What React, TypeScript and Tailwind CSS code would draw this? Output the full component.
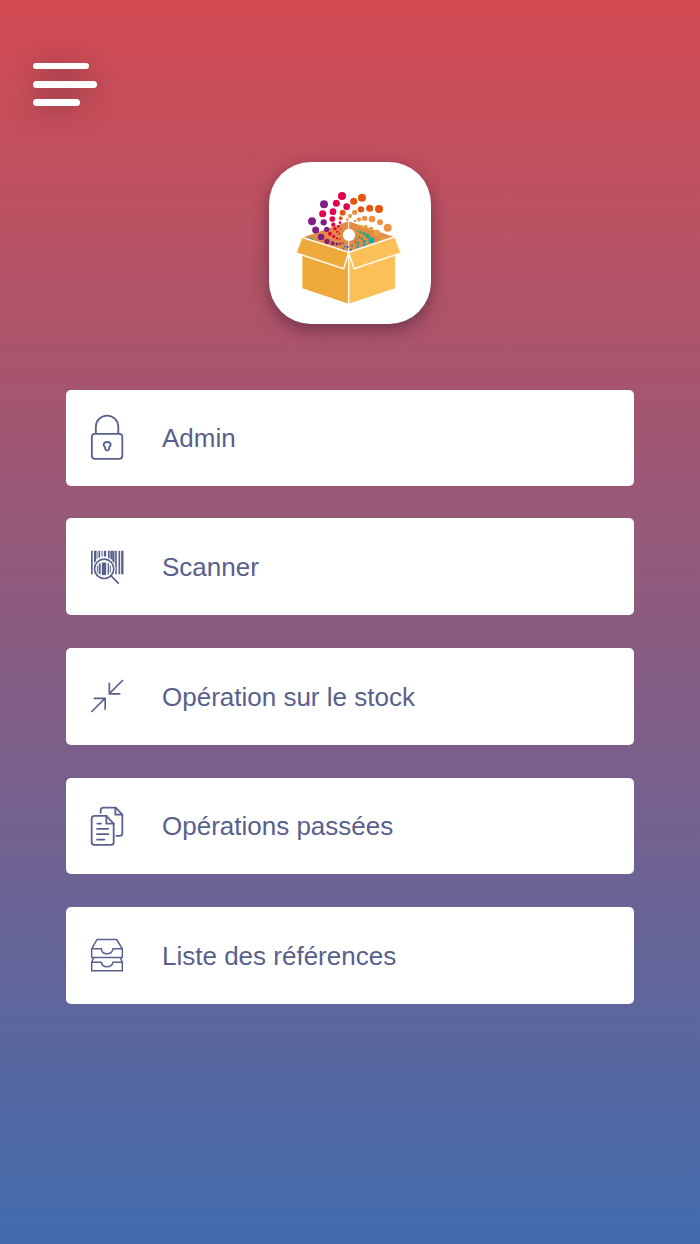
import type { ReactNode } from "react";

type Dot = [number, number, number, string];

const PURPLE = "#7f1f86";
const PINK = "#e5004f";
const ORANGE = "#e8540c";
const PEACH = "#f09148";
const GOLD = "#e5a044";
const GREEN = "#27a57c";
const TEAL = "#0fa9b4";
const BLUE = "#2f78ba";

const dots: Dot[] = [
  [207, 163, 12, PURPLE], [171, 214, 12, PURPLE], [206, 217, 9.5, PURPLE], [182, 240, 10.5, PURPLE],
  [215, 238, 8, PURPLE], [198, 261, 10, PURPLE], [216, 274, 8, PURPLE], [233, 280, 6, PURPLE],
  [246, 282, 4.5, PURPLE], [256, 281, 3.5, PURPLE], [264, 279, 2.5, PURPLE],
  [261, 138, 12, PINK], [244, 160, 10.5, PINK], [275, 170, 10, PINK], [203, 191, 10.5, PINK],
  [234, 185, 10, PINK], [232, 207, 8.5, PINK], [235, 224, 6.5, PINK], [225, 251, 6, PINK],
  [240, 236, 5, PINK], [236, 259, 5, PINK], [246, 265, 3.5, PINK], [247, 245, 3.5, PINK],
  [250, 229, 4, PINK], [255, 218, 4, PINK], [255, 267, 2.5, PINK], [253, 251, 2.5, PINK], [258, 237, 2.5, PINK],
  [321, 143, 12, ORANGE], [296, 154, 10.5, ORANGE], [318, 178, 9.5, ORANGE], [344, 175, 10.5, ORANGE],
  [372, 177, 12, ORANGE], [263, 188, 8.5, ORANGE], [257, 205, 6, ORANGE],
  [285, 198, 6, PEACH], [299, 187, 8, PEACH], [277, 209, 4, PEACH], [300, 213, 4, PEACH],
  [312, 208, 6.5, PEACH], [329, 205, 8, PEACH], [351, 207, 10, PEACH], [375, 217, 9, PEACH], [398, 233, 12, PEACH],
  [309, 228, 3, GOLD], [319, 228, 4, GOLD], [332, 230, 6, GOLD], [348, 237, 7, GOLD], [366, 249, 10, GOLD], [384, 267, 8, GOLD],
  [327, 251, 5, GREEN], [338, 258, 6.5, GREEN], [317, 247, 3.5, GREEN], [310, 244, 2.5, GREEN],
  [313, 261, 3, GREEN], [320, 266, 3.5, GREEN], [328, 274, 5, TEAL],
  [349, 271, 9, TEAL], [329, 286, 6, TEAL], [306, 268, 2.5, TEAL], [309, 280, 4, TEAL], [308, 290, 4, TEAL], [301, 275, 2.5, BLUE],
  [278, 291, 3.5, BLUE], [288, 300, 4, BLUE], [265, 297, 3, BLUE], [269, 290, 2.5, BLUE], [291, 287, 2.5, BLUE],
];

function Logo() {
  return (
    <svg viewBox="42 36 486 486" className="size-full" aria-hidden="true">
      <path d="M141 263 281 214 419 262 281 306Z" fill="#e38b42" />
      <path d="M281 212V306" stroke="#fff" strokeWidth="3" />
      <path d="m162 265q9-5 15 5l-12-3Z" fill={TEAL} />
      {dots.map(([x, y, r, fill], i) => (
        <circle key={i} cx={x} cy={y} r={r} fill={fill} />
      ))}
      <circle cx="282" cy="255" r="18.5" fill="#fff" />
      <path d="M142 310 281 310V461L142 415Z" fill="#edaa3a" />
      <path d="M281 310H420V415L281 461Z" fill="#fcc059" />
      <g stroke="#fffaf0" strokeWidth="4.5" strokeLinejoin="round">
        <path d="M140 262 281 307 266 356 123 309Z" fill="#edaa3a" />
        <path d="M420 260 281 307 297 356 438 309Z" fill="#fcc059" />
        <path d="M281 305V462" fill="none" />
      </g>
    </svg>
  );
}

function Icon({ viewBox, children }: { viewBox: string; children: ReactNode }) {
  return (
    <svg
      viewBox={viewBox}
      className="h-[50px] w-[55px] shrink-0"
      fill="none"
      stroke="#58618c"
      strokeWidth="5.4"
      strokeLinecap="round"
      strokeLinejoin="round"
      aria-hidden="true"
    >
      {children}
    </svg>
  );
}

const items: { label: string; icon: ReactNode }[] = [
  {
    label: "Admin",
    icon: (
      <Icon viewBox="60 99.5 165 150">
        <rect x="95.500" y="162" width="91.500" height="75" rx="9" />
        <path d="M107.500 160V141a33.700 33.700 0 0 1 67.400 0v19" />
        <path d="M135.500 202C127 195 131 186.500 141.500 186.500S156 195 147.500 202L147 209q-5.500 6-11 0Z" />
      </Icon>
    ),
  },
  {
    label: "Scanner",
    icon: (
      <Icon viewBox="0 4.5 165 150">
        <g strokeLinecap="butt" strokeWidth="5">
          <path d="M35.500 31v70M58 31v21M86.500 31v23M93.500 31v26M108 31v70M118 31v70" />
          <path d="M45 31v70" strokeWidth="6" />
          <path d="M51 31v25M66 31v17" strokeWidth="3" />
          <path d="M75 31v17M100 31v38M127 31v70" strokeWidth="7" />
        </g>
        <circle cx="72.500" cy="85" r="34" fill="#fff" stroke="none" />
        <circle cx="72.500" cy="85" r="29" strokeWidth="5" />
        <g strokeLinecap="butt">
          <path d="M59 69v32" strokeWidth="6" />
          <path d="M72 66v38" strokeWidth="13" />
          <path d="M85 68v34" strokeWidth="4" />
          <path d="M91 75v21M52 76v20" strokeWidth="3" />
        </g>
        <path d="m94 107 21 21" strokeWidth="5" />
      </Icon>
    ),
  },
  {
    label: "Opération sur le stock",
    icon: (
      <Icon viewBox="0 4 165 150">
        <g strokeLinecap="butt" strokeLinejoin="miter" strokeWidth="5">
          <path d="M129 31 88 72M88 39v33.500h33M34 127l41-41M41 86h34.500v34" />
        </g>
      </Icon>
    ),
  },
  {
    label: "Opérations passées",
    icon: (
      <Icon viewBox="0 2.4 165 150">
        <path d="M44 47h35l22 23v56q0 8-8 8H43q-8 0-8-8V56q0-9 9-9Z" />
        <path d="M79 47v23h22M52 70h11M51 86h34M51 102h34M51 118h22" />
        <path d="M62 38v-8q0-8 8-8h37l20 21v56q0 8-8 8h-10M106 22v21h21" />
      </Icon>
    ),
  },
  {
    label: "Liste des références",
    icon: (
      <Icon viewBox="0 0.5 165 150">
        <g strokeWidth="4.500" strokeLinejoin="miter">
          <path d="M35 57 51 29h59l17 28v26H35ZM35 57h29q2 15 17 15t18-15h28" />
          <path d="m41 84-6 13v26h92V97l-6-13M35 97h29q2 14 17 14t18-14h28" />
        </g>
      </Icon>
    ),
  },
];

export default function App() {
  return (
    <main className="flex h-[1244px] w-[700px] flex-col bg-linear-to-b/srgb from-[#d34b52] to-[#426cae] font-['Liberation_Sans',Arial,sans-serif]">
      <header className="pt-[62.500px] pl-[33px]">
        <button
          type="button"
          aria-label="Menu"
          className="flex h-[43.500px] w-16 flex-col items-start justify-between drop-shadow-[0_2px_12px_rgba(60,30,40,0.5)]"
        >
          <span className="h-[6.800px] w-14 rounded-full bg-white" />
          <span className="h-[6.800px] w-16 rounded-full bg-white" />
          <span className="h-[6.800px] w-[47px] rounded-full bg-white" />
        </button>
      </header>
      <div className="mx-auto mt-14 size-[162px] rounded-[42px] bg-white shadow-[0_6px_16px_rgba(40,20,40,0.45)]">
        <Logo />
      </div>
      <nav className="mx-[66px] mt-[65.500px] flex flex-col gap-[32.950px]">
        {items.map(({ label, icon }) => (
          <button
            key={label}
            type="button"
            className="flex h-[96.600px] items-center rounded-[5px] bg-white pl-3.5 text-left text-[26px] text-[#58618c] first:h-[96px]"
          >
            {icon}
            <span className="ml-[27px] pt-[2px]">{label}</span>
          </button>
        ))}
      </nav>
    </main>
  );
}
